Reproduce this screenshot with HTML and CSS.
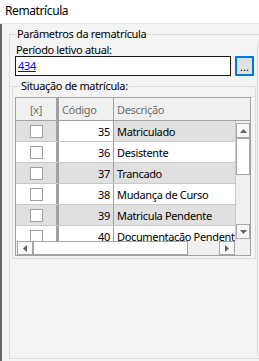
FILE: index.html
```html
<!DOCTYPE html>
<html lang="pt-BR">
<head>
    <meta charset="UTF-8">
    <meta name="viewport" content="width=device-width, initial-scale=1.0">
    <title>Rematrícula</title>
    <link rel="stylesheet" href="styles.css">
</head>

<body>
    <div class="titlebar">Rematrícula</div>

    <div class="main">
        <fieldset class="group group-params">
            <legend>Parâmetros da rematrícula</legend>
            <div class="params-body">
                <label class="field-label" for="periodo">Período letivo atual:</label>
                <div class="field-row">
                    <div class="input-box" id="periodo"><a href="#">434</a></div>
                    <button class="ellipsis-btn" type="button">...</button>
                </div>

                <!-- Grid with the enrollment statuses -->
                <fieldset class="group group-status">
                    <legend>Situação de matrícula:</legend>
                    <div class="grid">
                        <div class="grid-row grid-head">
                            <div class="cell col-check">[x]</div>
                            <div class="cell col-code">Código</div>
                            <div class="cell col-desc">Descrição</div>
                        </div>
                        <div class="grid-middle">
                            <div class="grid-body">
                                <div class="grid-row alt">
                                    <div class="cell col-check"><span class="checkbox"></span></div>
                                    <div class="cell col-code current">35</div>
                                    <div class="cell col-desc">Matriculado</div>
                                </div>
                                <div class="grid-row">
                                    <div class="cell col-check"><span class="checkbox"></span></div>
                                    <div class="cell col-code">36</div>
                                    <div class="cell col-desc">Desistente</div>
                                </div>
                                <div class="grid-row alt">
                                    <div class="cell col-check"><span class="checkbox"></span></div>
                                    <div class="cell col-code">37</div>
                                    <div class="cell col-desc">Trancado</div>
                                </div>
                                <div class="grid-row">
                                    <div class="cell col-check"><span class="checkbox"></span></div>
                                    <div class="cell col-code">38</div>
                                    <div class="cell col-desc">Mudança de Curso</div>
                                </div>
                                <div class="grid-row alt">
                                    <div class="cell col-check"><span class="checkbox"></span></div>
                                    <div class="cell col-code">39</div>
                                    <div class="cell col-desc">Matricula Pendente</div>
                                </div>
                                <div class="grid-row">
                                    <div class="cell col-check"><span class="checkbox"></span></div>
                                    <div class="cell col-code">40</div>
                                    <div class="cell col-desc">Documentação Pendente</div>
                                </div>
                            </div>
                            <div class="vscroll">
                                <div class="sb-btn">
                                    <svg width="7" height="4" viewBox="0 0 7 4"><path d="M0 4 L3.5 0 L7 4 Z" fill="#606060"/></svg>
                                </div>
                                <div class="sb-thumb-v"></div>
                                <div class="sb-track"></div>
                                <div class="sb-btn">
                                    <svg width="7" height="4" viewBox="0 0 7 4"><path d="M0 0 L7 0 L3.5 4 Z" fill="#606060"/></svg>
                                </div>
                            </div>
                        </div>
                        <div class="grid-bottom">
                            <div class="hscroll">
                                <div class="sb-btn">
                                    <svg width="4" height="7" viewBox="0 0 4 7"><path d="M4 0 L0 3.5 L4 7 Z" fill="#606060"/></svg>
                                </div>
                                <div class="sb-thumb-h"></div>
                                <div class="sb-track"></div>
                                <div class="sb-btn">
                                    <svg width="4" height="7" viewBox="0 0 4 7"><path d="M0 0 L4 3.5 L0 7 Z" fill="#606060"/></svg>
                                </div>
                            </div>
                            <div class="sb-corner"></div>
                        </div>
                    </div>
                </fieldset>
            </div>
        </fieldset>
    </div>
</body>

</html>
```

FILE: styles.css
```css
/* General Styles */
* {
    box-sizing: border-box;
}

body {
    margin: 0;
    width: 259px;
    height: 361px;
    overflow: hidden;
    background: #f4f4f4;
    font-family: "Noto Sans", Arial, sans-serif;
    font-size: 11px;
    letter-spacing: -0.35px;
    color: #000;
}

.titlebar {
    height: 24px;
    padding: 3px 0 0 5px;
    background: #fff;
    border-bottom: 1px solid #e6e6e6;
    font-size: 12px;
    letter-spacing: -0.4px;
    line-height: 16px;
}

.main {
    height: 337px;
    padding-top: 3px;
    border-left: 2px solid #666;
}

/* Group boxes */
.group {
    margin: 0;
    padding: 0;
    min-width: 0;
    border: 1px solid #dcdcdc;
}

.group legend {
    padding: 0 1px;
    line-height: 14px;
}

.group-params {
    width: 260px;
    margin-left: 7px;
    padding-bottom: 2px;
}

.group-params legend {
    margin-left: 6px;
}

.params-body {
    width: 248px;
    height: 313px;
    margin-top: 2px;
    padding-left: 2px;
    border-right: 1px solid #dcdcdc;
}

.field-label {
    display: block;
    margin-left: 4px;
    line-height: 13px;
}

.field-row {
    display: flex;
    gap: 4px;
    margin-left: 3px;
}

.input-box {
    width: 216px;
    height: 20px;
    padding-left: 2px;
    background: #fff;
    border: 1px solid #1a1a1a;
    line-height: 18px;
}

.input-box a {
    color: #0000ff;
}

.ellipsis-btn {
    width: 19px;
    height: 20px;
    padding: 0;
    background: #e1e1e1;
    border: 2px solid #0078d7;
    font-family: inherit;
    font-size: 11px;
    line-height: 18px;
    color: #000;
}

.group-status {
    width: 244px;
    height: 180px;
    margin-top: 3px;
    padding: 4px 0 0 2px;
}

.group-status legend {
    margin-left: 5px;
}

/* Data grid */
.grid {
    width: 236px;
    background: #f4f4f4;
    border: 1px solid #a0a0a0;
}

.grid-row {
    display: flex;
    height: 21px;
    background: #fff;
    border-bottom: 1px solid #c8c8c8;
}

.grid-row.alt {
    background: #e0e0e0;
}

.grid-head {
    height: 23px;
    background: #f0f0f0;
    border-bottom: 1px solid #a0a0a0;
    color: #6d6d6d;
}

.cell {
    display: flex;
    align-items: center;
    white-space: nowrap;
    overflow: hidden;
}

.col-check {
    width: 43px;
    justify-content: center;
    border-right: 3px solid #a0a0a0;
}

.col-code {
    width: 55px;
    padding-left: 3px;
    border-right: 1px solid #a0a0a0;
}

.grid-body .col-code {
    justify-content: flex-end;
    padding: 0 3px 0 0;
}

.col-code.current {
    background: #fff;
}

.col-desc {
    flex: 1;
    padding-left: 3px;
}

.checkbox {
    width: 13px;
    height: 13px;
    background: #fff;
    border: 1px solid #a0a0a0;
}

.grid-middle {
    display: flex;
    height: 120px;
}

.grid-body {
    width: 219px;
    overflow: hidden;
}

/* Scroll bars */
.vscroll {
    display: flex;
    flex-direction: column;
    width: 15px;
    padding: 2px 0;
    border-left: 1px solid #c8c8c8;
    background: #f0f0f0;
}

.sb-btn {
    display: flex;
    align-items: center;
    justify-content: center;
    width: 15px;
    height: 15px;
    background: #f8f8f8;
    border: 1px solid #a6a6a6;
}

.vscroll .sb-btn {
    width: 14px;
}

.sb-thumb-v {
    height: 37px;
    background: #fff;
    border: 1px solid #a6a6a6;
}

.sb-track {
    flex: 1;
}

.grid-bottom {
    display: flex;
    height: 14px;
}

.hscroll {
    display: flex;
    width: 219px;
    padding-left: 1px;
    background: #f0f0f0;
}

.hscroll .sb-btn {
    width: 16px;
    height: 14px;
}

.sb-thumb-h {
    width: 155px;
    background: #fff;
    border: 1px solid #a6a6a6;
}

.sb-corner {
    flex: 1;
    background: #f0f0f0;
}
```
